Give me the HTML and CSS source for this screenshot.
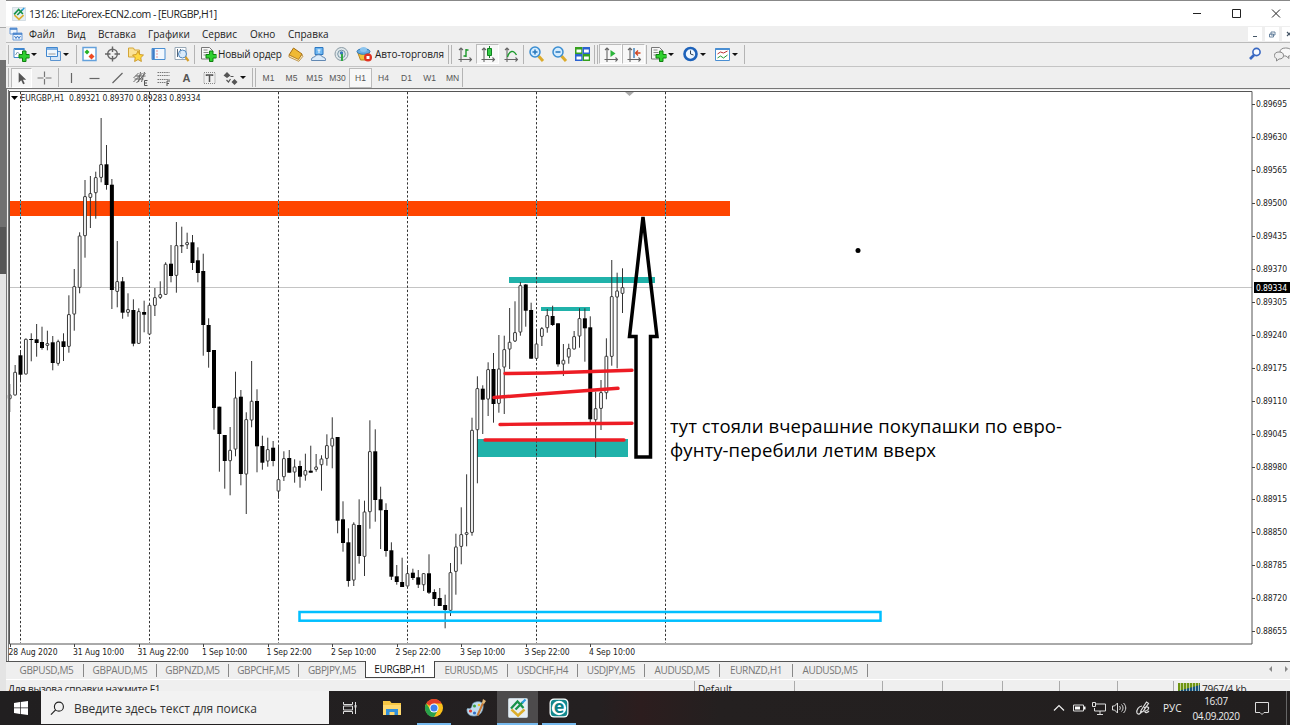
FILE: index.html
```
<!DOCTYPE html>
<html lang="ru">
<head>
  <meta charset="UTF-8" />
  <title>13126: LiteForex-ECN2.com - [EURGBP,H1]</title>
  <link rel="stylesheet" href="styles.css">
</head>
<body>
  <!-- shared icons -->
  <svg class="defs">
    <symbol id="logo" viewBox="0 0 20 20">
      <rect x=".5" y=".5" width="19" height="19" rx="1" fill="#e6eef3" stroke="#c4d0d8"/>
      <path d="M3.500 11.500L10 17.500l6.500-6" fill="none" stroke="#dcae2c" stroke-width="2.400"/>
      <path d="M3 10.500l6.500-7L15.500 10M7.500 11.500L15 4" fill="none" stroke="#17924a" stroke-width="2.300"/>
      <path d="M14 5L17.500 1.500" stroke="#2b9de0" stroke-width="2.200"/>
    </symbol>
    <symbol id="plus" viewBox="0 0 16 16">
      <path d="M9 5h3.500v3.500H16V12h-3.500v3.500H9V12H5.500V8.500H9z" fill="#2fd02f" stroke="#118011"/>
    </symbol>
    <symbol id="axes" viewBox="0 0 16 16">
      <path d="M4.500 2v11.500H15M2.500 4l2-2 2 2M13 11.500l2 2-2 2M2 13.500h2.500V16" fill="none" stroke="#666" stroke-width="1.1"/>
    </symbol>
    <symbol id="sheet" viewBox="0 0 16 16">
      <path d="M1 1.500h8l3 3V13H1z" fill="#f7f7f7" stroke="#777"/>
      <path d="M3 4h4M3 6.500h5M3 9h4" stroke="#888"/>
    </symbol>
  </svg>

  <div class="desktop">
    <div class="behind"></div>
    <div class="window">
      <div class="titlebar">
        <svg class="app-icon"><use href="#logo"/></svg>
        <span class="title">13126: LiteForex-ECN2.com - [EURGBP,H1]</span>
        <svg class="win-buttons" viewBox="0 0 100 24">
          <path d="M7 11.500h8M46.500 7.500h8v8h-8zM86 7.500l8 8M94 7.500l-8 8" fill="none" stroke="#222"/>
        </svg>
      </div>

      <div class="menubar">
        <svg class="menu-icon" viewBox="0 0 14 14">
          <path d="M1 1h7v6H1zM4 6h9v7H4z" fill="#eef5fd" stroke="#6a9bd8"/>
          <path d="M1 2h7M4 7h9" stroke="#3d7cc9" stroke-width="1.500"/>
          <path d="M5.500 9l1.500 2.500L8.500 9l1.500 2.500L11.500 9" fill="none" stroke="#3d7cc9"/>
        </svg>
        <span class="m1">Файл</span><span class="m2">Вид</span><span class="m3">Вставка</span><span class="m4">Графики</span><span class="m5">Сервис</span><span class="m6">Окно</span><span class="m7">Справка</span>
        <div class="mdi">
          <svg viewBox="0 0 14 14"><path d="M5 9.500h4" stroke="#456"/></svg>
          <svg viewBox="0 0 14 14"><path d="M6 5h4v3H6zM4.500 7h4v3h-4z" fill="#fff" stroke="#5b7896" stroke-width=".9"/></svg>
          <svg viewBox="0 0 14 14"><path d="M5 5l4 4M9 5l-4 4" stroke="#456" stroke-width="1.200"/></svg>
        </div>
      </div>

      <div class="toolbar main">
        <i class="grip"></i>
        <svg class="ic drop" viewBox="0 0 16 16"><path d="M.500 2.500h10v9H.500z" fill="#fff" stroke="#3f86cf"/><path d="M1 3h10" stroke="#3f86cf" stroke-width="2"/><path d="M2 9l2-3 2 2" fill="none" stroke="#79a"/><use href="#plus"/></svg>
        <i class="caret"></i>
        <svg class="ic drop" viewBox="0 0 16 16"><path d="M5 5.500h10v9H5z" fill="#d6e7f8" stroke="#5c94cf"/><path d="M1 1.500h11v9H1z" fill="#eef6fd" stroke="#3f86cf"/><path d="M1 3h11" stroke="#5d9bdc" stroke-width="1.500"/><path d="M3 8h7" stroke="#999"/></svg>
        <i class="caret"></i>
        <i class="sep"></i>
        <svg class="ic" viewBox="0 0 16 16"><path d="M1.500 1.500h13v13h-13z" fill="#fff" stroke="#63a1dc" stroke-width="1.400"/><path d="M5.500 3.500L8 6 5.500 8.500 3 6z" fill="#26b226"/><path d="M10 7.500l3 3-3 3-3-3z" fill="#ee4a22"/></svg>
        <svg class="ic" viewBox="0 0 16 16"><circle cx="8" cy="8" r="4.800" fill="none" stroke="#666" stroke-width="1.400"/><path d="M8 .500V6M8 10v5.500M.500 8H6M10 8h5.500" stroke="#666" stroke-width="1.400"/></svg>
        <svg class="ic" viewBox="0 0 16 16"><path d="M1 2h5l1 2h5v7H1z" fill="#fbe296" stroke="#d3a537"/><path d="M10.500 5l1.700 3.500 3.800.500-2.700 2.700.600 3.800-3.400-1.900-3.400 1.900.600-3.800L5 9l3.800-.500z" fill="#ffd83f" stroke="#c38b19" stroke-width=".8"/></svg>
        <svg class="ic" viewBox="0 0 16 16"><path d="M1.500 2.500h13v11h-13z" fill="#f2f8fe" stroke="#4a8ed2"/><path d="M3 3v10" stroke="#3d7cc9" stroke-width="2.500"/><path d="M6 5h1M6 8h1M6 11h1" stroke="#d33"/></svg>
        <svg class="ic" viewBox="0 0 16 16"><path d="M1.500 1.500h11v12h-11z" fill="#fff" stroke="#98a8b6"/><path d="M4 3v8M7 3v5" stroke="#567"/><circle cx="9" cy="8" r="4" fill="#cfe6fa" fill-opacity=".8" stroke="#4d87c0"/><path d="M12 11l3 4" stroke="#d49e2c" stroke-width="2.200"/></svg>
        <i class="sep"></i>
        <svg class="ic order" viewBox="0 0 16 16"><use href="#sheet"/><use href="#plus"/></svg>
        <span class="tb-text t-order">Новый ордер</span>
        <svg class="ic" viewBox="0 0 16 16"><path d="M6 2l8.500 6-3.500 6-9.500-5z" fill="#efb934" stroke="#a66f14"/><path d="M1.500 9l9.500 4.500 3.500-5 .800 2-4 4.800L1.500 11z" fill="#fff2c4" stroke="#a66f14" stroke-width=".7"/></svg>
        <svg class="ic" viewBox="0 0 16 16"><path d="M4.500 1.500h8v7h-8z" fill="#6fb7f1" stroke="#2b77c2"/><path d="M7 4h3M8.500 4v3" stroke="#fff"/><path d="M1 14.500c-.500-2 1-3.500 3-3.500 1-3 7-3 8 0 2 0 3.500 1.500 3 3.500z" fill="#dcebf9" stroke="#6288b2"/></svg>
        <svg class="ic" viewBox="0 0 16 16"><circle cx="8" cy="8" r="6.500" fill="#dfe7ea" stroke="#8b9ba5"/><circle cx="8" cy="8" r="3.800" fill="none" stroke="#7795a6"/><circle cx="8" cy="7" r="1.700" fill="#3a78b5"/><path d="M8.500 8v7" stroke="#33a944" stroke-width="2"/></svg>
        <svg class="ic" viewBox="0 0 16 16"><path d="M1 6h12l-2 8H4z" fill="#f0c23b" stroke="#b78520"/><ellipse cx="7" cy="5.500" rx="6.500" ry="2.800" fill="#67ade2" stroke="#2e76b5"/><ellipse cx="7" cy="3.500" rx="3.500" ry="2.500" fill="#8dc5ef"/><circle cx="11.500" cy="11.500" r="4" fill="#e03322"/><path d="M10 10h3v3h-3z" fill="#fff"/></svg>
        <span class="tb-text t-auto">Авто-торговля</span>
        <i class="sep tight"></i><i class="grip"></i>
        <svg class="ic" viewBox="0 0 16 16"><use href="#axes"/><path d="M9.500 3v8M9.500 4h2.500M7 10h2.500" stroke="#1b9a2b" stroke-width="1.400"/></svg>
        <svg class="ic on" viewBox="0 0 16 16"><use href="#axes"/><path d="M10 0v12" stroke="#128022"/><path d="M8 2.500h4v7H8z" fill="#35cc45" stroke="#128022"/></svg>
        <svg class="ic" viewBox="0 0 16 16"><use href="#axes"/><path d="M5 11c2-7 6-7 9-2" fill="none" stroke="#1b9a2b" stroke-width="1.300"/></svg>
        <i class="sep"></i>
        <svg class="ic" viewBox="0 0 16 16"><path d="M10 10l4.500 5" stroke="#dcab2c" stroke-width="3"/><circle cx="6.500" cy="6" r="5" fill="#d3ecff" stroke="#3a8dd1" stroke-width="1.500"/><path d="M6.500 3.500v5M4 6h5" stroke="#2676bb" stroke-width="1.500"/></svg>
        <svg class="ic" viewBox="0 0 16 16"><path d="M10 10l4.500 5" stroke="#dcab2c" stroke-width="3"/><circle cx="6.500" cy="6" r="5" fill="#d3ecff" stroke="#3a8dd1" stroke-width="1.500"/><path d="M4 6h5" stroke="#2676bb" stroke-width="1.500"/></svg>
        <svg class="ic" viewBox="0 0 16 16"><path d="M.500 1H8v7H.500zM8 8h7.500v7H8z" fill="#35a01d"/><path d="M8 1h7.500v7H8zM.500 8H8v7H.500z" fill="#2b62d0"/><path d="M2 3.500h4.800v3H2zM9.500 3.500h4.800v3H9.500zM2 10.500h4.800v3H2zM9.500 10.500h4.800v3H9.500z" fill="#fff"/></svg>
        <i class="sep tight"></i><i class="grip"></i>
        <svg class="ic on" viewBox="0 0 16 16"><use href="#axes"/><path d="M8 4l5 3.500L8 11z" fill="#2bb53b"/></svg>
        <svg class="ic on" viewBox="0 0 16 16"><use href="#axes"/><path d="M8.500 2v10" stroke="#2875b8" stroke-width="1.300"/><path d="M15 7h-5M12.500 4.500L10 7l2.500 2.500" fill="none" stroke="#d04722" stroke-width="1.300"/></svg>
        <i class="sep"></i>
        <svg class="ic drop" viewBox="0 0 16 16"><use href="#sheet"/><use href="#plus"/></svg>
        <i class="caret"></i>
        <svg class="ic drop" viewBox="0 0 16 16"><circle cx="8" cy="8" r="6" fill="#eef7ff" stroke="#1d62ba" stroke-width="2.600"/><path d="M8 4.500V8l3 1" fill="none" stroke="#345"/></svg>
        <i class="caret"></i>
        <svg class="ic drop" viewBox="0 0 16 16"><path d="M1 2.500h14v12H1z" fill="#fff" stroke="#4a8ed2"/><path d="M1 3h14" stroke="#4a8ed2" stroke-width="2"/><path d="M3 8l3-2 3 1 4-2" fill="none" stroke="#b33"/><path d="M3 12l3-2 3 2 4-3" fill="none" stroke="#293"/></svg>
        <i class="caret"></i>
        <i class="sep end"></i>
        <div class="tb-right">
          <svg viewBox="0 0 14 14"><circle cx="8.500" cy="5" r="3.600" fill="#f8fbff" stroke="#3867c2" stroke-width="1.600"/><path d="M6 8l-4 4" stroke="#3867c2" stroke-width="2.600"/></svg>
          <svg class="chat" viewBox="0 0 20 16"><path d="M12.500 2c4 0 6 1.500 6 4s-1 4-3 4l.500 2.500-3-2.500c-4 0-6-1.500-6-4s2-4 5.500-4z" fill="#f8f8f8" stroke="#888"/><path d="M6 6c3 0 4.500 1.200 4.500 3.500S9 13 6 13l-2.500 2V12.500C2 12 1.500 11 1.500 9.500 1.500 7.200 3 6 6 6z" fill="#eee" stroke="#888"/></svg>
        </div>
      </div>

      <div class="toolbar lines">
        <i class="grip"></i>
        <svg class="ic on cursor" viewBox="0 0 16 16"><path d="M5 2v11l2.700-2.500 2 4.200 1.800-.900-2-4h3.500z" fill="#555"/></svg>
        <svg class="ic" viewBox="0 0 16 16"><path d="M8 1.500V7M8 9v5.500M1 8h6M9 8h6" stroke="#777" stroke-width="1.200"/></svg>
        <i class="sep"></i>
        <svg class="ic" viewBox="0 0 16 16"><path d="M8 3v10" stroke="#666" stroke-width="1.200"/></svg>
        <svg class="ic" viewBox="0 0 16 16"><path d="M3 8.500h10" stroke="#666" stroke-width="1.200"/></svg>
        <svg class="ic" viewBox="0 0 16 16"><path d="M3 13L13 3" stroke="#666" stroke-width="1.300"/></svg>
        <svg class="ic" viewBox="0 0 16 16"><path d="M1 12L10 3M4 13l9-10M1 8l5-5M3 6h3M2 9h9M5 6h8M8 2L6 12M12 2L9 12" stroke="#666"/><path d="M15 10.500h-3v5h3M12 13h2.500" fill="none" stroke="#555"/></svg>
        <svg class="ic" viewBox="0 0 16 16"><path d="M2 2.500h12M2 5.500h12M2 9.500h12M2 12.500h8" stroke="#777" stroke-dasharray="1.500 .7"/><path d="M14.500 11h-3v5M11.500 13.500h2" fill="none" stroke="#555"/></svg>
        <span class="ic letter">A</span>
        <svg class="ic" viewBox="0 0 16 16"><path d="M2.500 2.500h11v11h-11z" fill="none" stroke="#888" stroke-dasharray="1 1"/><path d="M5 6V5h6v1M8 5v7" fill="none" stroke="#555" stroke-width="1.500"/></svg>
        <svg class="ic drop" viewBox="0 0 16 16"><path d="M4.500 2L8 5.500 4.500 8 1 5.500zM12 9l3 3-3 3-3-3z" fill="#555"/><path d="M8 6.500h3M4 10l2 2 2-3" fill="none" stroke="#555" stroke-width="1.200"/></svg>
        <i class="caret"></i>
        <i class="sep tight"></i><i class="grip"></i>
        <div class="periods"><span>M1</span><span>M5</span><span>M15</span><span>M30</span><span class="on">H1</span><span>H4</span><span>D1</span><span>W1</span><span>MN</span></div>
        <i class="sep tight"></i>
      </div>

      <svg class="chart" id="chart" viewBox="6 88 1284 573">
        <path d="M6 88.500h1284M6.500 88v573" stroke="#777"/>
        <path d="M8 90h1282v571H8z" fill="#fff"/>
        <path d="M9 201h721v15H9z" fill="#ff4500"/>
        <path d="M509 277h146v6H509zM541 307h49v4h-49zM477 439h151v18H477z" fill="#20b2aa"/>
        <path d="M9 287.500h1243" stroke="#c4c4c4"/>
        <g id="days" class="days"></g>
        <g id="candles" class="candles"></g>
        <rect x="299.500" y="612" width="581" height="8.700" class="zone"/>
        <path d="M8.500 90v571" stroke="#777"/>
        <path d="M9 91.500h1243V644H9.500V91" class="frame"/>
        <path d="M625 92h9l-4.500 4z" fill="#aaa"/>
        <path d="M11 96h7l-3.500 4z"/>
        <text x="20.500" y="101" textLength="180" class="label" xml:space="preserve">EURGBP,H1  0.89321 0.89370 0.89283 0.89334</text>
        <g id="scale" class="label"></g>
        <g class="marks">
          <path d="M505 373.500L545 373 632 370.300M494 397.500L540 394 618 388.300M500 424.500L540 424 632 423.200M485 440h139"/>
        </g>
        <path d="M643 217L629.500 336.500H636V457H650.500V336.500H657z" class="arrow"/>
        <circle cx="858" cy="250.500" r="2.500"/>
        <g class="note">
          <text x="670" y="433" textLength="392">тут стояли вчерашние покупашки по евро-</text>
          <text x="670" y="456.500" textLength="266">фунту-перебили летим вверх</text>
        </g>
      </svg>

      <div class="tabs">
        <span>GBPUSD,M5</span><span>GBPAUD,M5</span><span>GBPNZD,M5</span><span>GBPCHF,M5</span><span class="last">GBPJPY,M5</span><span class="active">EURGBP,H1</span><span>EURUSD,M5</span><span>USDCHF,H4</span><span>USDJPY,M5</span><span>AUDUSD,M5</span><span>EURNZD,H1</span><span>AUDUSD,M5</span>
        <svg viewBox="0 0 24 10"><path d="M6 2v6L3 5zM19 2v6l3-3z" fill="#888"/></svg>
      </div>

      <div class="status">
        <span class="help">Для вызова справки нажмите F1</span>
        <span class="profile">Default</span>
        <span></span><span></span><span></span><span></span><span></span><span></span>
        <span class="traffic">
          <svg viewBox="0 0 22 10"><path d="M0 0h22v10H0z" fill="#6f9512"/><path d="M0 10V8l22-6v8z" fill="#16537e"/><path d="M2.500 0v10M5.500 0v10M8.500 0v10M11.500 0v10M14.500 0v10M17.500 0v10M20.500 0v10" stroke="#e8edda" stroke-width=".7"/></svg>
          7967/4 kb
        </span>
      </div>
    </div>
  </div>

  <div class="taskbar">
    <div class="start"><svg viewBox="0 0 14 14"><path d="M0 2l6-.900v5.500H0zM6.700 1L14 0v6.600H6.700zM0 7.300h6V13l-6-.900zM6.700 7.300H14V14l-7.300-1z" fill="#fff"/></svg></div>
    <div class="search">
      <svg viewBox="0 0 16 16"><circle cx="9.500" cy="6" r="4.800" fill="none" stroke="#222" stroke-width="1.200"/><path d="M6 9.500L1 14.500" stroke="#222" stroke-width="1.300"/></svg>
      <span>Введите здесь текст для поиска</span>
    </div>
    <div class="apps">
      <div><svg viewBox="0 0 20 20"><path d="M3.500 4v2.500h9V4M3.500 16v-2.500h9V16M3.500 8h9v4h-9zM15.500 4v12" fill="none" stroke="#ddd"/><path d="M14.500 7h2v2.500h-2z" fill="#ddd"/></svg></div>
      <div><svg viewBox="0 0 20 20"><path d="M1 3h7l1.500 2H19v12H1z" fill="#f6c644"/><path d="M1 7h18v10H1z" fill="#ffda70"/><path d="M4 17v-6h12v6h-3.500v-3h-5v3z" fill="#3391db"/></svg></div>
      <div class="open"><svg viewBox="0 0 20 20"><circle cx="10" cy="10" r="9" fill="#fbc11a"/><path d="M10 10L2.200 5.500A9 9 0 0 1 17.800 5.500H10z" fill="#e43e2b"/><path d="M2.200 5.500A9 9 0 0 0 10 19l4-7-4-2-4 1z" fill="#28a14c"/><circle cx="10" cy="10" r="4.500" fill="#fff"/><circle cx="10" cy="10" r="3.500" fill="#3f80ee"/></svg></div>
      <div><svg viewBox="0 0 20 20"><path d="M10 4c5-1 8 1 7 6s-4 8-9 8-7-3-7-6 2 0 4-2 0-5 5-6z" fill="#bfdcf0" stroke="#7ba7c6" stroke-width=".7"/><circle cx="8.500" cy="8" r="1.500" fill="#3aa03f"/><circle cx="4.500" cy="13" r="1.600" fill="#e0392f"/><circle cx="8.500" cy="15" r="1.600" fill="#3370c9"/><circle cx="13" cy="7" r="1.300" fill="#efc32d"/><path d="M11.500 17.500L17 5" stroke="#c77733" stroke-width="2"/><path d="M16 5l1-4 3 2-2 3z" fill="#e5ba78"/></svg></div>
      <div class="open current"><svg><use href="#logo"/></svg></div>
      <div class="open"><svg viewBox="0 0 20 20"><rect x=".500" y=".500" width="19" height="19" rx="4.500" fill="#fff"/><rect x="1.800" y="1.800" width="16.400" height="16.400" rx="3.500" fill="#13898d"/><circle cx="10" cy="10" r="7.200" fill="#fff"/><text x="10" y="15" class="e-letter">e</text></svg></div>
    </div>
    <div class="tray">
      <svg viewBox="0 0 16 16"><path d="M3 10.500l5-5 5 5" fill="none" stroke="#eee" stroke-width="1.200"/></svg>
      <svg viewBox="0 0 16 16"><path d="M2.500 5h10v6h-10z" fill="none" stroke="#ddd"/><path d="M4 6.500h5v3H4zM13 6.500h1.500v3H13z" fill="#fff"/></svg>
      <svg viewBox="0 0 16 16"><path d="M5 4h9.500v7H3.500V8M9 11v3M6 14.500h6M1.500 2.500h3v4h-3z" fill="none" stroke="#ddd"/></svg>
      <svg viewBox="0 0 16 16"><path d="M1.500 6h2l3-3v10l-3-3h-2zM8.500 6c1 1 1 3 0 4M10.500 4.500c2 2 2 5 0 7M12.500 3c3 3 3 7 0 10" fill="none" stroke="#ddd"/></svg>
      <svg class="pen" viewBox="0 0 16 16"><path d="M6 10.500l5.500-8.500 2 1.300L8 11.500l-2.500 1zM7 6c-3 0-6 4-5 7 1 2 4 1 5-2M9 8c3-2 6-1 4 1.500s-4 1-3 2.500 3 0 4-1" fill="none" stroke="#ddd" stroke-width="1.200"/></svg>
      <span class="lang">РУС</span>
      <span class="clock">16:07<br>04.09.2020</span>
      <svg class="notify" viewBox="0 0 16 16"><path d="M1.500 2.500h13v10h-4.500L8 14.500 6 12.500H1.500z" fill="none" stroke="#ddd"/></svg>
      <i class="peek"></i>
    </div>
  </div>

  <script>
    // hourly bars: [high, body top, body bottom, low, bearish]
    const bars = [
      [384,394.7,399,412,0],[365,372,395.3,395.3,0],[350,355.3,374.7,381.7,1],[338.5,339,374.3,374.3,0],
      [333.3,339,339,361.3,1],[324,339.3,343,356.7,1],[326.7,342,348,349.7,1],[330.7,343.3,345.7,350.3,0],
      [336,342.3,363,370.3,1],[339.7,341.3,363.7,365.7,0],[333.3,341.3,347,361,1],[295.3,314.3,346.7,352.7,0],
      [269,286.3,314.3,330.7,0],[232.3,235.7,287.7,293.3,0],[180,196.3,236,257.7,0],[176,193.3,197.7,228,0],
      [171.7,177.3,193,218.7,0],[118,164.3,177.7,182.3,0],[145,164.3,185,189.7,1],[179,184.7,290,309,1],
      [241,281.3,291.7,307.3,0],[277,281.3,312.7,318.7,1],[293.3,309.3,312.7,316.7,0],[299.3,310,343.7,346.3,1],
      [308.3,311.3,343.7,343.7,0],[300.7,312,314.7,332.3,1],[304,305,334.3,334.3,0],[288,297.3,305.7,316,0],
      [281.3,294.3,297.7,299,0],[262.3,264,294.7,294.7,0],[245,263.7,276,282.3,1],[222,245.3,275.7,292.7,0],
      [226.7,245.3,245.3,253,1],[232.7,242.3,245,249,0],[235,242.3,263,270,1],[247.3,260.3,273,282.3,1],
      [253.7,271,325,355.7,1],[318.3,325,352,367.7,1],[350,350,408,429.7,1],[406.7,406.7,434,471.7,1],
      [435,435,461,488.7,1],[427,450,461,495.3,0],[371.7,397.7,449.3,456.3,0],[390,396.7,474,485.3,1],
      [412.3,419.3,474.3,514,0],[361,401,420.3,427.3,0],[389.3,401,446.3,472.3,1],[435.7,446,462.7,469.7,1],
      [437.7,449.3,461.3,466.7,0],[441,447.7,461,466.3,1],[445.3,479.3,491.3,498.7,0],[451.3,458.3,477,481,0],
      [450,458,472.7,472.7,1],[459.3,466.7,472.3,482.7,0],[460.7,466,476.7,487.7,1],[453.7,470.3,475.3,480.7,0],
      [445.7,470.7,472.7,472.7,1],[454,466.7,469.7,471.7,0],[455.3,458.7,465,490.7,0],[434.3,445.3,458.7,465.7,0],
      [417.3,438,446.3,468.3,0],[437,437,520.7,533.3,1],[501.3,519.3,543,551.7,1],[528.3,542.3,581,586.7,1],
      [522.3,524,580.3,586,0],[499.3,525,556,563.7,1],[500.7,511.7,556.7,576,0],[420.3,451.3,512,528.7,0],
      [429.3,451.3,500,521.7,1],[486.7,499.3,510.3,549,1],[503.3,510,551,556.7,1],[542.3,550.3,576.7,580,1],
      [565,576.3,582,584.7,1],[557.7,582,587,587,1],[566.7,573.3,586.3,586.3,0],[568.7,572.7,578,580,1],
      [570,577.3,584.7,588,1],[573.3,573.3,585,591,0],[554.3,573.3,592.7,594,1],[589.3,592,599,606,1],
      [588,598,606,606,1],[594.7,605,610,628.3,1],[563,572.3,610.7,616,0],[533.7,546.7,571.7,594.7,0],
      [507.3,534.3,546.7,564.3,0],[474.3,532.3,534.7,546.3,0],[417.7,430,532.7,535.7,0],[376.3,388.3,430,483.3,0],
      [385.3,388.7,399.7,434,1],[362.3,369.3,399.3,416,0],[353,369,404,422.7,1],[335,368.7,403.7,412.7,0],
      [335.7,349.3,367.3,414,0],[308,342,349.3,369,0],[301.3,332.3,341.3,342,0],[282,285.3,332.3,335.7,0],
      [284,284.5,310.7,326.7,1],[302.7,310,358.7,358.7,1],[329.3,343.7,358.7,358.7,0],[327,328.3,336.7,346,0],
      [309,315.3,328,332.7,0],[305.7,316,325,326,1],[323.3,323.3,364.3,366.7,1],[344,360,364.3,376,0],
      [343.7,348.3,357.3,363.7,0],[331,336.3,349.3,349.3,0],[308.3,318.3,336.3,347.7,0],[308.3,318.3,328.3,361.7,1],
      [316.3,327.3,419.3,422.3,1],[391.7,408.3,420,457.7,0],[380,392.3,408.7,430,0],[338.3,356,393,399.3,0],
      [260,296.3,356.7,365.7,0],[272.7,290.7,297.3,368.3,0],[268.3,287.3,293.7,313,0]
    ];

    let out = "";
    bars.forEach(([high, top, bottom, low, bear], i) => {
      const x = 20.5 + (i - 2) * 5.375;
      out += `<path d="M${x} ${high}V${low}"/>`;
      if (bear) {
        out += `<rect class="bear" x="${x - 2}" y="${top}" width="4" height="${Math.max(bottom - top, 1)}"/>`;
      } else {
        out += `<rect class="bull" x="${x - 1.4}" y="${top + 0.3}" width="2.8" height="${bottom - top - 0.6}" rx=".4"/>`;
      }
    });
    document.getElementById("candles").innerHTML = out;

    out = "";
    for (let i = 0; i < 6; i++) {
      const x = 20.5 + i * 129;
      out += `<path d="M${x} 92V643"/>`;
      if (x < 730) out += `<path class="inv" d="M${x} 201V216"/>`;
    }
    document.getElementById("days").innerHTML = out;

    out = "";
    for (let i = 0; i < 17; i++) {
      const y = 104.3 + i * 32.93;
      out += `<path d="M1252 ${Math.round(y) + 0.5}h3" stroke="#444"/><text x="1256" y="${y + 3}" textLength="31">${(0.89695 - i * 0.00065).toFixed(5)}</text>`;
    }
    out += `<path d="M1254 282h36v11h-36z" fill="#000"/><text x="1256" y="290.800" textLength="31" fill="#fff">0.89334</text>`;

    const times = [["28 Aug 2020", 49], ["31 Aug 10:00", 51], ["31 Aug 22:00", 51], ["1 Sep 10:00", 45], ["1 Sep 22:00", 45],
      ["2 Sep 10:00", 45], ["2 Sep 22:00", 45], ["3 Sep 10:00", 45], ["3 Sep 22:00", 45], ["4 Sep 10:00", 46]];
    times.forEach(([t, w], i) => {
      const x = 8.5 + i * 64.5;
      out += `<path d="M${Math.round(x) + 1.5} 644v3" stroke="#444"/><text x="${x}" y="654.500" textLength="${w}">${t}</text>`;
    });
    document.getElementById("scale").innerHTML = out;
  </script>
</body>
</html>
```
FILE: styles.css
```
* {
  box-sizing: border-box;
}

body {
  margin: 0;
  width: 1290px;
  height: 725px;
  overflow: hidden;
  font-family: "Open Sans", "Noto Sans", sans-serif;
  font-size: 10px;
  color: #222;
  background: #efefef;
}

svg {
  display: block;
  flex: none;
}

.defs {
  display: none;
}

.desktop {
  display: flex;
  height: 691px;
}

.behind {
  width: 6px;
  background: linear-gradient(#f2f2f2 27px, #aaa 27px, #aaa 28px, #e8e8e8 28px, #e8e8e8 60px, #707070 60px, #707070 227px, #555 227px, #555 274px, #e4e4e4 274px);
}

.window {
  width: 1284px;
  height: 691px;
  overflow: hidden;
  border-top: 1px solid #888;
  background: #efefef;
}

.titlebar {
  display: flex;
  align-items: center;
  height: 25px;
  padding-left: 6px;
  background: #fff;
}

.app-icon {
  width: 14px;
  height: 14px;
}

.title {
  margin-left: 3px;
  font-size: 10.5px;
  letter-spacing: -0.5px;
  white-space: nowrap;
}

.win-buttons {
  width: 100px;
  height: 24px;
  margin-left: auto;
  margin-right: 4px;
}

.menubar {
  display: flex;
  align-items: center;
  height: 17px;
  border-bottom: 1px solid #bbb;
  padding-left: 3px;
}

.menu-icon {
  width: 14px;
  height: 14px;
  margin-right: 6px;
}

.menubar span {
  white-space: nowrap;
}

.m1 { width: 38px; }
.m2 { width: 31px; }
.m3 { width: 50px; }
.m4 { width: 54px; }
.m5 { width: 48px; }
.m6 { width: 38px; }

.mdi {
  display: flex;
  gap: 3px;
  margin-left: auto;
  margin-right: -6px;
}

.mdi svg {
  width: 14px;
  height: 14px;
  background: #fff;
}

.toolbar {
  display: flex;
  align-items: center;
  height: 23px;
  padding-left: 2px;
  padding-bottom: 1px;
}

.toolbar.lines {
  height: 22px;
  padding-bottom: 0;
  border-top: 1px solid #c4c4c4;
}

.ic {
  width: 23px;
  height: 20px;
  padding: 2px 3px;
  flex: none;
}

.ic.drop {
  width: 19px;
  padding: 2px 1px;
}

.sep + .drop {
  margin-left: 1px;
}

.ic.order {
  width: 19px;
  margin-left: 3px;
  padding: 2px 1px;
}

.ic.on {
  border: 1px solid #bbb;
  border-right-color: #fff;
  border-bottom-color: #fff;
  background: #f7f7f7;
  padding: 1px 2px;
}

.ic.cursor {
  width: 21px;
  margin-left: -1px;
  margin-right: 1px;
}

.letter {
  font: bold 11px/16px "Liberation Sans", sans-serif;
  text-align: center;
  color: #555;
}

.caret {
  width: 0;
  margin: 0 7px 0 0;
  border: 3px solid transparent;
  border-top-color: #111;
  border-bottom: 0;
}

.grip {
  width: 2px;
  height: 19px;
  margin-right: 2px;
  border-left: 1px solid #b4b4b4;
}

.sep {
  width: 1px;
  height: 19px;
  margin: 0 1px;
  background: #b4b4b4;
}

.lines .ic + .sep {
  margin: 0 1px 0 2px;
}

.caret + .sep {
  margin-left: 0;
}

.sep.tight {
  margin: 0 2px 0 0;
}

.lines .caret + .tight {
  margin: 0 2px 0 -1px;
}

.tight + .grip {
  margin-right: 0;
}

.caret + .sep.end {
  margin-left: -1px;
}

.tb-text {
  flex: none;
  white-space: nowrap;
}

.t-order {
  width: 66px;
  letter-spacing: -0.15px;
}

.t-auto {
  width: 72px;
  margin-left: -1px;
  margin-right: 1px;
  letter-spacing: -0.1px;
}

.tb-right {
  display: flex;
  align-items: center;
  gap: 11px;
  margin-left: auto;
  margin-right: -3px;
}

.tb-right svg {
  width: 14px;
  height: 14px;
}

.tb-right .chat {
  width: 20px;
  height: 16px;
}

.periods {
  display: flex;
  margin-right: -2px;
  font-family: "Liberation Sans", sans-serif;
  font-size: 8.5px;
  color: #555;
}

.periods span {
  width: 23px;
  line-height: 20px;
  text-align: center;
}

.periods .on {
  border: 1px solid #bbb;
  background: #f7f7f7;
  line-height: 18px;
}

/* chart */
.chart {
  width: 1284px;
  height: 573px;
}

.frame {
  fill: none;
  stroke: #555;
}

.label {
  font-family: "DejaVu Sans Condensed", "DejaVu Sans", sans-serif;
  font-size: 8.5px;
  fill: #222;
}

.days path {
  stroke: #333;
  stroke-dasharray: 2.3 2;
}

.days .inv {
  stroke: #3aa6c4;
}

.candles path {
  stroke: #333;
}

.bear {
  fill: #000;
}

.bull {
  fill: #fff;
  stroke: #222;
  stroke-width: .9;
}

.zone {
  fill: none;
  stroke: #00bfff;
  stroke-width: 2.5;
}

.marks {
  fill: none;
  stroke: #ed1c24;
  stroke-width: 3.4;
  stroke-linecap: round;
}

.arrow {
  fill: none;
  stroke: #000;
  stroke-width: 3.5;
}

.note {
  font-family: "Open Sans", "Noto Sans", sans-serif;
  font-size: 18.5px;
}

/* chart tabs */
.tabs {
  display: grid;
  grid-template-columns: 78px 73px 72px 70px 66px 70px 73px 70px 67px 75px 73px 75px 1fr;
  height: 18px;
  border-top: 1px solid #555;
  color: #777;
}

.tabs span {
  height: 13px;
  margin-top: 2px;
  border-right: 1px solid #888;
  line-height: 13px;
  letter-spacing: -0.35px;
  text-align: center;
  white-space: nowrap;
}

.tabs span:first-child {
  padding-left: 4px;
}

.tabs .last {
  border-right: 0;
}

.tabs .active {
  height: 17px;
  margin-top: -1px;
  padding: 2px 0 0;
  border: 1px solid #444;
  border-top: 0;
  background: #fff;
  color: #111;
}

.tabs svg {
  width: 24px;
  height: 10px;
  margin: 2px 0 0 auto;
}

.status {
  display: grid;
  grid-template-columns: 689px 100px 88px 60px 60px 57px 58px 56px 1fr;
  height: 12px;
  border-top: 1px solid #fff;
  overflow: hidden;
}

.status span {
  height: 12px;
  margin-top: 1px;
  border-right: 1px solid #aaa;
  line-height: 17px;
  white-space: nowrap;
}

.status .help {
  padding-left: 2px;
  letter-spacing: -0.2px;
}

.status .profile {
  padding-left: 3px;
}

.status .traffic {
  display: flex;
  gap: 2px;
  padding-left: 4px;
  border-right: 0;
  letter-spacing: -0.2px;
}

.traffic svg {
  width: 22px;
  height: 10px;
  margin-top: 2px;
}

/* taskbar */
.taskbar {
  display: flex;
  height: 34px;
  background: linear-gradient(90deg, #211f20, #242021 600px, #2c1d1e 640px, #242020 720px, #221f1f);
  color: #eee;
}

.start {
  display: flex;
  align-items: center;
  justify-content: center;
  width: 41px;
}

.start svg {
  width: 14px;
  height: 14px;
}

.search {
  display: flex;
  align-items: center;
  width: 288px;
  height: 33px;
  padding: 2px 0 0 9px;
  background: #f2f2f2;
  color: #333;
  font-size: 12px;
  letter-spacing: -0.05px;
}

.search svg {
  width: 15px;
  height: 15px;
  margin-right: 9px;
}

.apps {
  display: flex;
}

.apps div {
  display: flex;
  align-items: center;
  justify-content: center;
  width: 42px;
  padding-top: 1px;
  border-bottom: 2px solid transparent;
}

.apps svg {
  width: 20px;
  height: 20px;
}

.apps .open {
  width: 34px;
  margin: 0 4px;
  border-color: #76b9ed;
}

.apps .current {
  width: 41px;
  margin: 0;
  background: #4d4b4c;
}

.e-letter {
  font: bold 18px "Open Sans", sans-serif;
  text-anchor: middle;
  fill: #0d7f85;
}

.tray {
  display: flex;
  align-items: center;
  margin-left: auto;
}

.tray svg {
  width: 16px;
  height: 16px;
  margin-right: 4px;
}

.tray svg:first-child {
  margin-left: -2px;
}

.tray .pen {
  margin: 0 12px 0 4px;
}

.lang {
  width: 27px;
}

.clock {
  width: 52px;
  padding-top: 1px;
  line-height: 15px;
  letter-spacing: -0.4px;
  text-align: center;
}

.tray .notify {
  margin: 0 16px 0 12px;
}

.peek {
  width: 4px;
  height: 34px;
  border-left: 1px solid #666;
}
```
